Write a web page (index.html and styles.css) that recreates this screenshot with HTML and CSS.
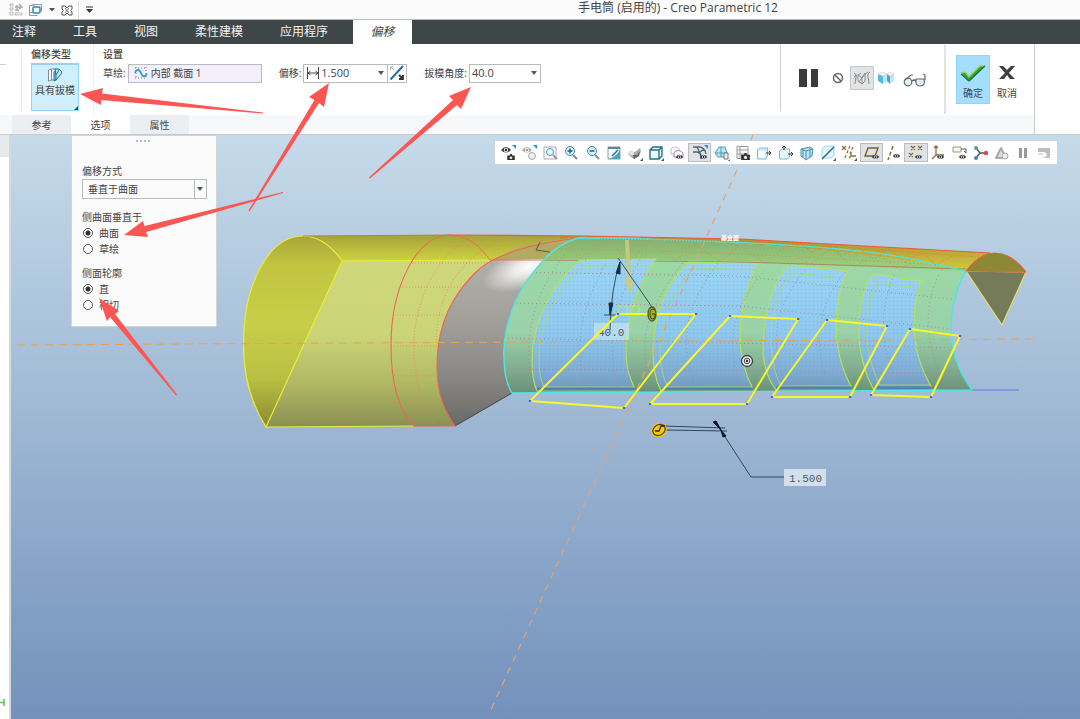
FILE: index.html
```html
<!DOCTYPE html>
<html lang="zh-CN">
<head>
<meta charset="utf-8">
<title>手电筒 (启用的) - Creo Parametric 12</title>
<link rel="stylesheet" href="styles.css">
</head>
<body>
<svg class="defs" width="0" height="0" aria-hidden="true">
  <defs>
    <symbol id="eye" viewBox="0 0 10 8"><path d="M0 4Q5-2 10 4Q5 9 0 4Z" fill="#3b3b3b"/><circle cx="5" cy="4" r="2.2" fill="#eee"/><circle cx="5" cy="4" r="1.2" fill="#222"/></symbol>
    <symbol id="cam" viewBox="0 0 10 8"><path d="M0 2h3l1-2h2l1 2h3v6H0Z" fill="#333"/><circle cx="5" cy="5" r="1.8" fill="#eee"/></symbol>
  </defs>
</svg>

<header class="titlebar">
  <div class="quick">
    <button class="plain" aria-label="重新生成"><svg width="20" height="16" viewBox="0 0 20 16"><path d="M7 2h3v2H7zM7 6h3v2H7zM7 10h3v3H7zM12 11h7v2h-7z" fill="none" stroke="#bbb"/><path d="M12 5h6M16 2l3 3-3 2M14 3v5M12 8h4" fill="none" stroke="#aaa" stroke-width="1.400"/></svg></button>
    <button class="plain" aria-label="窗口"><svg width="15" height="16" viewBox="0 0 15 16"><path d="M4.500 2.500h9v7M1.500 3.500h5M1.500 3.500v7h3M1.500 10v3.500h8" fill="none" stroke="#999"/><rect x="5" y="5" width="7" height="6" rx="1" fill="#eef8fc" stroke="#2789ae" stroke-width="1.500"/></svg></button>
    <button class="plain" aria-label="窗口列表"><svg width="8" height="16" viewBox="0 0 8 16"><path d="M1 6h6L4 9.500z" fill="#555"/></svg></button>
    <button class="plain" aria-label="关闭"><svg width="12" height="16" viewBox="0 0 12 16"><path d="M1 4h3l2 2 2-2h3v3L9.500 8.500 11 10v3H8l-2-2-2 2H1v-3l1.500-1.500L1 7z" fill="#fff" stroke="#555"/><path d="M4 6l4 5M8 6l-4 5" stroke="#777"/></svg></button>
    <button class="plain more" aria-label="自定义"><svg width="9" height="16" viewBox="0 0 9 16"><path d="M1 5h7" stroke="#333"/><path d="M1 7h7l-3.500 4z" fill="#333"/></svg></button>
  </div>
  <h1 class="title">手电筒 (启用的) - Creo Parametric 12</h1>
</header>

<nav class="menu">
  <button>注释</button><button>工具</button><button>视图</button><button>柔性建模</button><button>应用程序</button><button class="current">偏移</button>
</nav>

<section class="dashboard">
  <div class="dash-main">
    <div class="ribbon">
      <div class="cut-group"></div>
      <div class="group type-group">
        <h2>偏移类型</h2>
        <button class="type-button">
          <svg width="16" height="16" viewBox="0 0 16 16"><path d="M1.500 3l3-1v11l-3 1zM4.500 2h5v11h-5" fill="#f4fafd" stroke="#7d8a90"/><path d="M7 5l4-3v5l-2 6-2 1z" fill="#77c3dd" stroke="#237291"/><path d="M8 2h4l2.500 2.500v2L9 13V8z" fill="#b8e4f2" stroke="#237291"/><path d="M9 8l3-5" stroke="#237291"/></svg>
          <span>具有拔模</span>
        </button>
      </div>
      <div class="group settings">
        <h2>设置</h2>
        <div class="fields">
          <label for="sketch">草绘:</label>
          <div class="box sketch-box">
            <svg width="14" height="14" viewBox="0 0 14 14"><path d="M2 1v12M12 1v12M1 2h12M1 12h12" stroke="#777" stroke-dasharray="1 2"/><path d="M1 7C3 2 6 4 7 7s3 5 6 1" fill="none" stroke="#229fdb" stroke-width="1.800"/></svg>
            <input id="sketch" value="内部 截面 1">
          </div>
          <label for="offset">偏移:</label>
          <div class="box offset-box">
            <svg width="14" height="14" viewBox="0 0 14 14"><path d="M1.500 1v12M12.500 1v12M2 7h10M4.500 5L2 7l2.500 2M9.500 5L12 7 9.500 9" fill="none" stroke="#444"/></svg>
            <input id="offset" value="1.500">
            <button class="plain" aria-label="偏移值列表"><svg width="6" height="4" viewBox="0 0 6 4"><path d="M0 0h6L3 4z" fill="#555"/></svg></button>
          </div>
          <button class="flip" aria-label="反向"><svg width="16" height="16" viewBox="0 0 16 16"><path d="M1.500 14.500L14 1" stroke="#236f97" stroke-width="2"/><path d="M1.500 5V2h3M2 2l3 3" fill="none" stroke="#aaa"/><path d="M14 10v4h-4M10 10l4 4" fill="none" stroke="#333" stroke-width="1.800"/></svg></button>
          <label for="draft">拔模角度:</label>
          <div class="box draft-box">
            <input id="draft" value="40.0">
            <button class="plain" aria-label="角度列表"><svg width="6" height="4" viewBox="0 0 6 4"><path d="M0 0h6L3 4z" fill="#555"/></svg></button>
          </div>
        </div>
      </div>
      <div class="controls">
        <button class="plain" aria-label="暂停"><svg width="20" height="20" viewBox="0 0 20 20"><path d="M0 1h8v18H0zM12 1h7v18h-7z" fill="#3b3b3b"/></svg></button>
        <button class="plain ban" aria-label="无预览"><svg width="12" height="12" viewBox="0 0 12 12"><circle cx="6" cy="6" r="4.500" fill="none" stroke="#666" stroke-width="1.500"/><path d="M3 3l6 6" stroke="#666" stroke-width="1.500"/></svg></button>
        <button class="plain toggled" aria-label="分离预览"><svg width="18" height="16" viewBox="0 0 18 16"><path d="M1 3q3 1 2 5t-1 6M5 5l4 3v6l-4-3zM9 8l3-4v7l-3 3M5 5l3-2M17 2q-3 1-2 5t1 7M12 4l3-2M1 7l3-2M6 12l6-9" fill="#f3f3f3" fill-opacity=".6" stroke="#888"/></svg></button>
        <button class="plain" aria-label="连接预览"><svg width="18" height="14" viewBox="0 0 18 14"><path d="M1 3l5 2v8l-5-3z" fill="#51b9e8"/><path d="M6 5l4-2v7l-4 3zM13 5l4-2v7l-4 3z" fill="#bfe7f7"/><path d="M10 3l3 2v8l-3-3z" fill="#3ba8dc"/><path d="M1 3l4-2 5 2-4 2zM10 3l3-2 4 2-4 2z" fill="#f7fafb" stroke="#bbb" stroke-width=".5"/></svg></button>
        <button class="plain glasses" aria-label="检查几何"><svg width="24" height="14" viewBox="0 0 24 14"><circle cx="5" cy="9" r="3.800" fill="#e2eff5" stroke="#666" stroke-width="1.200"/><path d="M13 6h8q2 7-4 7-5 0-4-7Z" fill="#e2eff5" stroke="#666" stroke-width="1.200"/><path d="M9 8q2-2 4 0M2 7L8 2h2M22 7V2l-2-1" fill="none" stroke="#666" stroke-width="1.200"/></svg></button>
      </div>
      <div class="finish">
        <button class="ok"><svg width="26" height="20" viewBox="0 0 26 20"><path d="M1 11l4-2 4 5L20 3h5L10 18H8z" fill="#27a047"/><path d="M1 10l4-1 4 5L20 3h5" fill="none" stroke="#a5cf32" stroke-width="1.500"/><path d="M1 11l8 7L25 3" fill="none" stroke="#197348" stroke-width="1.200"/></svg><span>确定</span></button>
        <button><svg width="18" height="20" viewBox="0 0 18 20"><path d="M1 3h4l4 4 4-4h4l-6 7 6 6h-5l-3-4-3 4H1l6-6z" fill="#3f3f3f"/></svg><span>取消</span></button>
      </div>
    </div>
    <div class="tabs" role="tablist">
      <button role="tab">参考</button><button role="tab" class="selected" aria-selected="true">选项</button><button role="tab">属性</button>
    </div>
  </div>
</section>

<main class="workspace">
  <aside class="tree">
    <svg class="tree-mark" width="5" height="9" viewBox="0 0 5 9"><path d="M0 4.500h4M4 1v7" stroke="#55c94c" stroke-width="1.500"/></svg>
  </aside>
  <div class="viewport">
    <svg class="scene" viewBox="11 135 1069 584" preserveAspectRatio="xMinYMin meet">
      <defs>
        <linearGradient id="face" x1="0" y1="236" x2="0" y2="427" gradientUnits="userSpaceOnUse"><stop offset="0" stop-color="#a7a739"/><stop offset=".15" stop-color="#c1c440"/><stop offset=".45" stop-color="#c8ce49"/><stop offset=".75" stop-color="#b9bf43"/><stop offset="1" stop-color="#898b31"/></linearGradient>
        <linearGradient id="band" x1="0" y1="236" x2="0" y2="262" gradientUnits="userSpaceOnUse"><stop offset="0" stop-color="#a4a43a"/><stop offset=".5" stop-color="#bbbd3c"/><stop offset="1" stop-color="#cfd446"/></linearGradient>
        <linearGradient id="front" x1="0" y1="260" x2="0" y2="427" gradientUnits="userSpaceOnUse"><stop offset="0" stop-color="#ced77b"/><stop offset=".45" stop-color="#cbd477"/><stop offset=".75" stop-color="#afb763"/><stop offset="1" stop-color="#8a8f52"/></linearGradient>
        <linearGradient id="cone" x1="0" y1="245" x2="0" y2="427" gradientUnits="userSpaceOnUse"><stop offset="0" stop-color="#b5b4b0"/><stop offset=".4" stop-color="#a2a19c"/><stop offset=".7" stop-color="#8b8a86"/><stop offset="1" stop-color="#686866"/></linearGradient>
        <radialGradient id="shine" cx="0" cy="0" r="50" gradientUnits="userSpaceOnUse" gradientTransform="translate(530 266) rotate(-22) scale(1 .4)"><stop offset="0" stop-color="#fff"/><stop offset=".35" stop-color="#fff" stop-opacity=".75"/><stop offset="1" stop-color="#fff" stop-opacity="0"/></radialGradient>
        <linearGradient id="green" x1="0" y1="260" x2="0" y2="392" gradientUnits="userSpaceOnUse"><stop offset="0" stop-color="#9cd9a6"/><stop offset=".55" stop-color="#9ad1a9"/><stop offset=".8" stop-color="#83b192"/><stop offset="1" stop-color="#6a9179"/></linearGradient>
        <linearGradient id="greenTop" x1="0" y1="238" x2="0" y2="268" gradientUnits="userSpaceOnUse"><stop offset="0" stop-color="#84b06f"/><stop offset="1" stop-color="#9dd07b"/></linearGradient>
        <linearGradient id="blue" x1="0" y1="260" x2="0" y2="392" gradientUnits="userSpaceOnUse"><stop offset="0" stop-color="#9ad4f4"/><stop offset=".55" stop-color="#8fc8ef"/><stop offset=".85" stop-color="#7fadd4"/><stop offset="1" stop-color="#6f95b9"/></linearGradient>
        <linearGradient id="orange" x1="0" y1="240" x2="0" y2="270" gradientUnits="userSpaceOnUse"><stop offset="0" stop-color="#b19235"/><stop offset="1" stop-color="#d2ca40"/></linearGradient>
        <pattern id="dots" width="4" height="4" patternUnits="userSpaceOnUse"><rect width="1" height="1" x="1" y="1" fill="#5793d8" opacity=".35"/></pattern>
        <clipPath id="bodyClip"><path d="M585 237C555 240 536 268 524 285C505 318 503 345 504 358C504 375 507 385 512 393L972 390Q939 345 958 288Q961 279 966 271Q820 242 585 237Z"/></clipPath>
        <clipPath id="ringClip"><path d="M450 235C415 235 391 290 391 345C391 385 400 412 414 426H455C445 412 437 395 437 367C437 345 440 308 475 273Q500 247 585 237Z"/></clipPath>
      </defs>

      <path d="M303 236L450 235 585 236 740 239 990 253 966 271 490 260 342 261Q325 238 303 236Z" fill="url(#band)"/>
      <path d="M560 236L740 239 990 253 966 271Q820 246 560 240Z" fill="url(#orange)"/>
      <path d="M342 261L490 260H510L455 426 266 427Z" fill="url(#front)"/>
      <path d="M303 236C268 236 243.500 285 243.500 345C243.500 380 252 405 266 427L342 261C330 244 318 236 303 236Z" fill="url(#face)" stroke="#e9eb3c" stroke-width="1.200"/>
      <path d="M342 261L490 260M266 427L414 426" stroke="#eaec3a" stroke-width="1.200"/>
      <path d="M585 237C540 240 500 250 475 273C440 308 437 345 437 367C437 395 445 412 455 426L512 393L640 260V237Z" fill="url(#cone)"/>
      <path d="M585 237C540 240 500 250 475 273C440 308 437 345 437 367C437 395 445 412 455 426L512 393L640 260V237Z" fill="url(#shine)"/>
      <path d="M585 237C540 240 515 246 494 260L545 259L590 237Z" fill="#b3aa62"/>
      <path d="M455 426L512 393" stroke="#444"/>

      <g clip-path="url(#ringClip)" fill="none" stroke="#e9826b" stroke-dasharray="1 2" stroke-width=".8">
        <path d="M391 246H570M391 263H500M391 287H470M391 315H445M391 346H440M391 376H445M391 404H460"/>
        <path d="M475 236C435 252 414 305 414 345Q414 392 435 426M510 236C455 257 436 300 436 345"/>
        <path d="M450 236Q480 238 500 254M490 236Q510 240 530 246M520 236L560 246"/>
      </g>
      <g fill="none" stroke="#ef6553" stroke-width="1.100">
        <path d="M450 235C415 235 391 290 391 345C391 385 400 412 414 426H455C445 412 437 395 437 367C437 345 440 308 475 273Q500 247 585 237"/>
        <path d="M450 235C468 236 480 246 490 260H545" stroke-width=".9"/>
        <path d="M303 236L450 235" stroke="#9c8b35" stroke-width=".9"/>
      </g>

      <path d="M585 237C555 240 536 268 524 285C505 318 503 345 504 358C504 375 507 385 512 393L972 390Q939 345 958 288Q961 279 966 271Q820 242 585 237Z" fill="url(#green)"/>
      <path d="M585 237C565 239 553 248 543 259L740 261 966 271Q820 242 585 237Z" fill="url(#greenTop)"/>
      <path d="M543 260L740 262 966 269" fill="none" stroke="#ab7d5b" stroke-width=".9"/>

      <g stroke="#b4e25a" stroke-width="1.200" fill="url(#blue)">
        <path d="M580 260C545 290 532 330 532 360C532 375 534 385 537 391L636 391C628 375 626 365 626 350C626 320 637 285 656 259Z"/>
        <path d="M689 262C662 285 653 325 653 353Q653 375 661 391H754Q740 365 740 337Q741 295 758 264Z"/>
        <path d="M788 265C769 285 763 325 763 353Q765 376 776 390H853Q836 360 836 325Q836 295 848 271Z"/>
        <path d="M872 274C861 290 858 320 859 340Q863 372 874 390H933Q914 358 914 325Q914 300 921 281Z"/>
      </g>
      <g fill="url(#dots)">
        <path d="M580 260C545 290 532 330 532 360Q532 380 537 391H636Q625 365 626 350C626 320 637 285 656 259Z"/>
        <path d="M689 262C662 285 653 325 653 353Q653 375 661 391H754Q740 365 740 337Q741 295 758 264Z"/>
        <path d="M788 265C769 285 763 325 763 353Q765 376 776 390H853Q836 360 836 325Q836 295 848 271Z"/>
        <path d="M872 274C861 290 858 320 859 340Q863 372 874 390H933Q914 358 914 325Q914 300 921 281Z"/>
      </g>
      <g fill="none" stroke="#a9d970" stroke-width=".9">
        <path d="M578 260L582 266H650M582 266C552 295 539 330 539 358Q539 378 544 387H634"/>
        <path d="M689 262L694 268 754 270M694 268C669 292 660 325 660 353Q661 375 668 387H752"/>
        <path d="M788 265L791 273 845 278M791 273C775 292 771 320 771 345Q773 372 781 386H851"/>
        <path d="M872 274L877 283 919 288M877 283C867 300 866 320 867 340Q871 370 880 385H931"/>
      </g>
      <path d="M537 389H636M661 389H754M776 388H853M874 388H933" stroke="#4a76a8" stroke-width="3" opacity=".7"/>

      <g clip-path="url(#bodyClip)" fill="none" stroke="#b08287" stroke-width=".8" stroke-dasharray="1 3">
        <path d="M500 272L740 276 960 300M500 303L740 306 960 330M500 338L960 348M500 369L960 373"/>
        <path d="M565 255C535 290 528 330 529 355Q530 380 537 393M605 265Q580 310 580 345T587 393M640 260Q610 310 612 350T622 393M685 260Q645 310 645 345T655 393M720 260Q682 310 687 350T700 393M765 270Q730 310 733 350T748 393M805 270Q772 310 777 350T795 393M845 272Q815 310 820 350T840 393M894 275Q878 315 886 350T905 393M938 275Q922 315 932 350T950 393"/>
        <path stroke="#cf8069" d="M550 249Q700 250 940 265M560 240l25 20 20-20 25 20 20-18 25 19 20-17 25 18 20-17 25 18 20-16 25 18 20-16 25 18 20-14 25 17 20-12 25 14"/>
      </g>
      <path d="M580 238Q680 239 770 244T907 258L966 271" fill="none" stroke="#58dfd1" stroke-width="1.400"/>
      <path d="M585 237C555 240 536 268 524 285C505 318 503 345 504 358C504 375 507 385 512 393L972 390Q939 345 958 288Q961 279 966 271" fill="none" stroke="#4fe5e5" stroke-width="1.400"/>
      <path d="M450 235L585 236 740 239 990 253" fill="none" stroke="#ef5a3b" stroke-width="1.200"/>
      <path d="M600 239L760 242 980 257M800 243l12 9 15-7 15 11 16-9 15 12 17-10 15 13 17-10 14 13 18-10" fill="none" stroke="#d66d38" stroke-width=".8" stroke-dasharray="1 2"/>
      <path d="M966 271L1026 272 1002 325Z" fill="#757b58" stroke="#dddf76" stroke-width="1.200"/>
      <path d="M966 271C978 256 987 253 995 253C1008 253 1018 262 1026 272Z" fill="#8b8935" stroke="#e55e3c" stroke-width="1.200"/>
      <path d="M972 390H1019" stroke="#7890df" stroke-width="1.300"/>
      <path d="M540 242l-4 8 14 2" stroke="#5e5743" fill="none"/>

      <path d="M17 345L1037 339" stroke="#eea24c" stroke-dasharray="8 6" stroke-width="1"/>
      <path d="M753 135L607 455 489 714" fill="none" stroke="#e9a16f" stroke-dasharray="7 6" stroke-width="1.200"/>

      <path d="M625 240h4l2 40h3l-3 15-7-15h3z" fill="#c9ca80" opacity=".9"/>
      <path d="M618 306h9v8h-9zM630 306h9v8h-9z" fill="none" stroke="#b5e575"/>
      <rect x="594" y="323" width="35" height="17" fill="#c8e4f0" opacity=".7"/>
      <text x="598" y="336" class="dim-text">40.0</text>
      <path d="M610 330Q611 288 620 262M604 315H616M618 258L652 307" fill="none" stroke="#35505f"/>
      <path d="M609 303h4l-3 12zM616 273l4-11v12z" fill="#123045" stroke="#123045"/>

      <g fill="none" stroke="#f8f727" stroke-width="2" stroke-linejoin="round">
        <path d="M618 314H696L624 408 530 401Z"/><path d="M730 316L798 319 747 404H650Z"/><path d="M827 320L887 326 850 397H772Z"/><path d="M910 329L960 336 931 397 871 395Z"/>
      </g>
      <path d="M618 314h.1M696 314h.1M624 408h.1M530 401h.1M730 316h.1M798 319h.1M747 404h.1M650 404h.1M827 320h.1M887 326h.1M850 397h.1M772 397h.1M910 329h.1M960 336h.1M931 397h.1M871 395h.1" stroke="#3f68e8" stroke-width="2.200" stroke-linecap="square"/>
      <ellipse cx="652" cy="314" rx="4" ry="7" fill="#a5ad27" stroke="#555c1b" stroke-width="1.300"/><path d="M655 310q-5-3-5 4t5 4v-4h-3" fill="none" stroke="#45490f"/>
      <circle cx="747" cy="361" r="5.500" fill="#eee" stroke="#3b4245" stroke-width="1.300"/><circle cx="747" cy="361" r="2.800" fill="none" stroke="#444"/><circle cx="747" cy="361" r="1.200" fill="#333"/>
      <text x="721" y="240" class="csys-text">基金面</text>

      <path d="M664 426L725 428M664 430L727 431M716 423L751 477H784" fill="none" stroke="#35435d"/>
      <path d="M713 422l3-1 5 9zM721 430l5 6-3 1z" fill="#0a1033" stroke="#0a1033"/>
      <ellipse cx="659" cy="430" rx="8" ry="7" transform="rotate(-30 659 430)" fill="#f5c916"/><ellipse cx="659" cy="430" rx="6.500" ry="5.200" transform="rotate(-30 659 430)" fill="none" stroke="#574508" stroke-width="1.300"/><path d="M655 431h4l2-5h4" fill="none" stroke="#32290b" stroke-width="1.300"/>
      <rect x="784" y="469" width="42" height="17" fill="#d3dfeb"/>
      <text x="789" y="482" class="dim-text">1.500</text>
    </svg>

    <div class="toolbar" role="toolbar">
      <button aria-label="显示"><svg viewBox="0 0 16 16"><use href="#eye" x="0" y="1" width="12" height="8"/><use href="#cam" x="7" y="9" width="8" height="6"/><path d="M12 0h4v4z" fill="#1b91ed"/></svg></button>
      <button aria-label="隐藏"><svg viewBox="0 0 16 16"><g opacity=".45"><use href="#eye" x="0" y="1" width="12" height="8"/></g><circle cx="11" cy="11" r="3.500" fill="#eee" stroke="#aaa"/><path d="M12 0h4v4z" fill="#1b91ed"/></svg></button>
      <button aria-label="重新调整"><svg viewBox="0 0 16 16"><path d="M2 2h12v12H2z" fill="#fafafa" stroke="#aaa"/><circle cx="8" cy="7" r="3.500" fill="#e2f5fd" stroke="#4f9cbd"/><path d="M11 10l4 4" stroke="#999" stroke-width="2"/></svg></button>
      <button aria-label="放大"><svg viewBox="0 0 16 16"><circle cx="7" cy="6" r="4.500" fill="#def3fb" stroke="#378bad"/><path d="M4.500 6h5M7 3.500v5" stroke="#176083" stroke-width="1.500"/><path d="M10 10l4 4" stroke="#888" stroke-width="2"/></svg></button>
      <button aria-label="缩小"><svg viewBox="0 0 16 16"><circle cx="7" cy="6" r="4.500" fill="#def3fb" stroke="#378bad"/><path d="M4.500 6h5" stroke="#176083" stroke-width="1.500"/><path d="M10 10l4 4" stroke="#888" stroke-width="2"/></svg></button>
      <button aria-label="重画"><svg viewBox="0 0 16 16"><path d="M2 2h12v12H2z" fill="#f1fafd" stroke="#999"/><path d="M2 14Q9 13 14 5v9z" fill="#4fa1bd"/><path d="M2 3h12M6 11l6-6" stroke="#28738c" stroke-width="1.500"/></svg></button>
      <button aria-label="渲染"><svg viewBox="0 0 16 16"><path d="M1 9l2-3 5 1 5-4 1 3-2 5-5 3-3-2z" fill="#aaa"/><path d="M6 10l4 0 3-4-1 5-5 3z" fill="#666"/><circle cx="4.500" cy="8" r="2.500" fill="#e2e2e2"/><path d="M16 13v3h-3z" fill="#555"/></svg></button>
      <button aria-label="显示样式"><svg viewBox="0 0 16 16"><path d="M2 5l3-3h9v9l-3 3H2zM2 5h9v9M11 5l3-3" fill="#eef9fd" stroke="#24718e" stroke-width="1.400"/><path d="M16 13v3h-3z" fill="#555"/></svg></button>
      <button aria-label="图层"><svg viewBox="0 0 16 16"><path d="M2 9V4q4-4 8 0v5z" fill="#fff" stroke="#bbb"/><path d="M5 12V8q4-5 9 0v4z" fill="#fff" stroke="#9a76b5"/><use href="#eye" x="6" y="9" width="9" height="6"/></svg></button>
      <button class="on" aria-label="样式显示"><svg viewBox="0 0 16 16"><path d="M1 2h7q5 1 6 7M1 7h4q4 0 4 7M5 2l4 8M12 4L7 8" fill="none" stroke="#4c6673" stroke-width="1.300"/><use href="#eye" x="7" y="9" width="9" height="6"/><path d="M12 0h4v4z" fill="#1b91ed"/></svg></button>
      <button aria-label="截面"><svg viewBox="0 0 16 16"><path d="M1 8l4-6h6l2 6v4H4z" fill="#b9e5f4" stroke="#519ab7"/><path d="M1 8h12M7 2v10" stroke="#519ab7"/><path d="M10 8h4v6h-4z" fill="#eee" stroke="#777"/><path d="M16 14v2h-2z" fill="#555"/></svg></button>
      <button aria-label="视图管理器"><svg viewBox="0 0 16 16"><path d="M2 1.500h11v12H2zM2 5h11M2 9h11M5 2v11" fill="#fafafa" stroke="#999"/><use href="#cam" x="6" y="8" width="9" height="7"/></svg></button>
      <button aria-label="平移"><svg viewBox="0 0 16 16"><path d="M1.500 5l2-2h8v8l-2 3h-8z" fill="#cdeefa" stroke="#6fc0df"/><path d="M2.500 6h6v7h-6z" fill="#fff"/><path d="M10 8h5M13 6l2 2-2 2" fill="none" stroke="#333"/></svg></button>
      <button aria-label="移动"><svg viewBox="0 0 16 16"><path d="M1.500 6l2-2h8v8l-2 2h-8z" fill="#e6f7fc" stroke="#6bbddb"/><path d="M6 5V1M4 3l2-2 2 2M10 9h5M13 7l2 2-2 2" fill="none" stroke="#333"/></svg></button>
      <button aria-label="透视"><svg viewBox="0 0 16 16"><path d="M2 4l9-2 3 2-1 7-6 4-5-4zM2 4l5 2v8M7 6l7-2M4 5v7M11 3v9" fill="#bce3f1" stroke="#4d94b1"/></svg></button>
      <button aria-label="剖面"><svg viewBox="0 0 16 16"><path d="M2 4l3-3h9v9l-3 3H2z" fill="#e0f4fb" stroke="#a2d5e8"/><path d="M2 14L14 2" stroke="#286b83" stroke-width="1.500"/><path d="M16 13v3h-3z" fill="#555"/></svg></button>
      <button aria-label="基准显示"><svg viewBox="0 0 16 16"><path d="M1 1l4 4M5 1L1 5" stroke="#8c7139" stroke-width="1.300"/><path d="M9 1L3 15M12 2L9 9" stroke="#8c7139" stroke-width="1.300" stroke-dasharray="3 2"/><path d="M10 7v4l-2 2M10 11h5" fill="none" stroke="#8c7139" stroke-width="1.300"/><path d="M16 13v3h-3z" fill="#555"/></svg></button>
      <button class="on" aria-label="平面显示"><svg viewBox="0 0 16 16"><path d="M4 3h10l-3 8H1z" fill="none" stroke="#7b602c" stroke-width="1.400"/><use href="#eye" x="7" y="9" width="9" height="6"/></svg></button>
      <button aria-label="轴显示"><svg viewBox="0 0 16 16"><path d="M7 1L2 15" stroke="#896d37" stroke-width="1.500" stroke-dasharray="4 2"/><use href="#eye" x="6" y="8" width="9" height="6"/></svg></button>
      <button class="on" aria-label="点显示"><svg viewBox="0 0 16 16"><path d="M3 1l4 4M7 1L3 5M10 1l4 4M14 1l-4 4M1 8l4 4M5 8l-4 4" stroke="#896d37" stroke-width="1.300"/><use href="#eye" x="6" y="9" width="9" height="6"/></svg></button>
      <button aria-label="坐标系显示"><svg viewBox="0 0 16 16"><path d="M6 1v9l-4 4M6 10h8M4 3l2-2 2 2" fill="none" stroke="#896d37" stroke-width="1.300"/><use href="#eye" x="6" y="9" width="9" height="6"/></svg></button>
      <button aria-label="注释显示"><svg viewBox="0 0 16 16"><path d="M1 2h8v5H1z" fill="#fbf6d8" stroke="#999"/><path d="M9 4h5v4M12 6l2 2" fill="none" stroke="#555"/><use href="#eye" x="6" y="9" width="9" height="6"/></svg></button>
      <button aria-label="旋转中心"><svg viewBox="0 0 16 16"><path d="M3 3l4 5-4 5M7 8h6" fill="none" stroke="#555" stroke-width="1.500"/><circle cx="3" cy="3" r="2" fill="#51a57b"/><circle cx="3" cy="13" r="2" fill="#4788ae"/><circle cx="13" cy="8" r="2.200" fill="#d34e4b"/></svg></button>
      <button aria-label="警告"><svg viewBox="0 0 16 16"><path d="M7 3l5 10H2z" fill="#ddd" stroke="#aaa" stroke-width="2" stroke-linejoin="round"/><circle cx="11" cy="11" r="3" fill="#eee" stroke="#aaa"/></svg></button>
      <button aria-label="暂停"><svg viewBox="0 0 16 16"><path d="M4 3h3v10H4zM9 3h3v10H9z" fill="#999"/></svg></button>
      <button aria-label="停止"><svg viewBox="0 0 16 16"><path d="M2 3h12v10H6q5-1 5-3T8 7H2z" fill="#bdbdbd"/><path d="M2 8h5v2H2z" fill="#ddd"/></svg></button>
    </div>

    <form class="options">
      <div class="grip"></div>
      <label class="caption" for="mode">偏移方式</label>
      <div class="select-wrap">
        <select id="mode"><option>垂直于曲面</option></select>
        <svg width="6" height="4" viewBox="0 0 6 4"><path d="M0 0h6L3 4z" fill="#555"/></svg>
      </div>
      <fieldset>
        <legend>侧曲面垂直于</legend>
        <label><input type="radio" name="normal" checked>曲面</label>
        <label><input type="radio" name="normal">草绘</label>
      </fieldset>
      <fieldset>
        <legend>侧面轮廓</legend>
        <label><input type="radio" name="profile" checked>直</label>
        <label><input type="radio" name="profile">相切</label>
      </fieldset>
    </form>
  </div>
</main>

<svg class="arrows" viewBox="0 0 1080 719" preserveAspectRatio="xMinYMin meet" aria-hidden="true">
  <g fill="#fd5552">
    <path d="M80 94L103 88 102 93.500 263 112.500 263 113.500 101 100 101 105Z"/>
    <path d="M329 83L309 97 314.500 100 248.500 210.500 249.500 211.500 319 103 324 107Z"/>
    <path d="M471 87L449 96 453 100 369 177.500 370 178.500 457 105 461 109Z"/>
    <path d="M124 235L143 221 144.500 226 283 192 283 193 146 232 148 237Z"/>
    <path d="M99 298L119 311 115 314 177 394.500 176 395.500 110 317 107 321Z"/>
  </g>
</svg>
</body>
</html>
```

FILE: styles.css
```css
* { box-sizing: border-box; }
body {
  margin: 0;
  min-height: 100vh;
  display: flex;
  flex-direction: column;
  position: relative;
  overflow-x: hidden;
  background: #fff;
  color: #444;
  font: 10px/16px "Open Sans", "Noto Sans CJK SC", sans-serif;
}
button, input, select { font: inherit; color: inherit; }
button { border: 0; padding: 0; background: none; }
svg { display: block; }
.defs { position: absolute; }
.plain { display: flex; align-items: center; justify-content: center; }

.titlebar {
  display: grid;
  grid-template-columns: 276px 1fr;
  height: 20px;
  background: #fbfbfb;
  border-bottom: 1px solid #b5baba;
}
.quick { display: flex; align-items: center; gap: 5px; padding-left: 3px; }
.quick .more { border-left: 1px solid #ddd; padding-left: 6px; height: 18px; }
.title { margin: 0; font-size: 12px; font-weight: 400; line-height: 16px; text-align: center; }

.menu { display: flex; height: 24px; padding-left: 12px; gap: 37px; background: #3e4647; font-size: 12px; }
.menu button { color: #f2f2f2; line-height: 24px; }
.menu .current { background: #fff; color: #444; font-style: italic; width: 59px; margin-left: -12px; }

.dashboard { display: flex; padding-right: 45px; border-bottom: 1px solid #c3cdd0; }
.dash-main { flex: 1; border-right: 1px solid #c8cccd; }
.ribbon { display: flex; height: 71px; }
.cut-group { width: 22px; border-right: 1px solid #e6e6e6; margin: 5px 0 4px; }
.cut-group::before { content: ""; display: block; width: 6px; height: 1px; margin-top: 15px; background: #ccc; }
.group { padding-top: 2px; }
.group h2 { margin: 0; font-size: 10px; line-height: 16px; font-weight: 500; }
.type-group { width: 71px; padding-left: 9px; }
.type-button {
  position: relative;
  display: flex;
  flex-direction: column;
  align-items: center;
  width: 48px;
  height: 48px;
  margin-top: 1px;
  padding-top: 2px;
  background: #cfefff;
  border: 1px solid #8fd5f8;
  border-top-width: 2px;
}
.type-button::after {
  content: "";
  position: absolute;
  right: 0;
  bottom: 0;
  border: 2px solid;
  border-color: transparent #444 #444 transparent;
}
.type-button span { line-height: 14px; }
.settings { padding-left: 9px; border-left: 1px solid #eee; }
.fields { display: flex; align-items: center; margin-top: 1px; height: 20px; }
.fields label { margin-right: 2px; white-space: nowrap; }
.box { display: flex; align-items: center; height: 19px; border: 1px solid #b9bcbd; background: #fff; padding: 0 3px 0 2px; }
.box input { flex: 1; min-width: 0; border: 0; padding: 0; background: transparent; outline: 0; font-size: 11px; }
.sketch-box { width: 134px; margin-right: 17px; padding-left: 5px; gap: 3px; background: #f3effd; }
.sketch-box input { font-size: 10px; }
.offset-box { width: 85px; gap: 1px; }
.flip { width: 19px; height: 19px; padding-left: 1px; border: 1px solid #b9bcbd; border-left: 0; margin-right: 17px; }
.draft-box { width: 72px; }
.controls { display: flex; align-items: center; margin: 1px 0 4px auto; width: 164px; padding-left: 18px; border-left: 1px solid #cdd0d1; }
.ban { margin: 0 6px 0 13px; }
.toggled { width: 24px; height: 24px; background: #e1e3e5; border: 1px solid #c5c7c9; margin-right: 3px; }
.glasses { margin: 3px 0 0 8px; }
.finish { display: flex; width: 90px; padding: 10px 0 0 10px; margin: 1px 0; border-left: 2px solid #e1e3e4; }
.finish button { display: flex; flex-direction: column; align-items: center; width: 34px; height: 49px; padding-top: 8px; gap: 2px; }
.finish .ok { background: #a3deff; border: 1px solid #8fd5f8; padding-top: 7px; }

.tabs { display: flex; height: 19px; padding-left: 12px; background: #f6f8fa; }
.tabs button { width: 59px; background: #eceff1; line-height: 20px; }
.tabs .selected { background: #fff; }

.workspace { flex: 1; display: flex; }
.tree { display: flex; align-items: flex-end; width: 11px; padding-bottom: 12px; border-right: 2px solid #d3dadd; background: linear-gradient(#e5ebeb 22px, #fff 22px); }
.viewport { flex: 1; position: relative; background: linear-gradient(#c5dbea, #a1bad5 45%, #86a3c7 76%, #7391bb); }
.scene { width: 100%; height: auto; }
.dim-text { font: 11px "Liberation Mono", monospace; fill: #4e5a66; }
.csys-text { font: 6px "Noto Sans CJK SC", sans-serif; font-weight: 700; fill: #fff; }

.toolbar { position: absolute; top: 5px; left: 483px; right: 22px; display: flex; height: 25px; padding: 2px; background: #fff; border: 1px solid #cfd6da; }
.toolbar button { flex: 1; display: flex; align-items: center; justify-content: center; }
.toolbar svg { width: 16px; height: 16px; }
.toolbar .on { background: #dfe3e6; border: 1px solid #b8bdc1; }

.options { position: absolute; top: 0; left: 60px; width: 146px; padding: 4px 10px 13px; background: #fbfbfb; border: 1px solid #d0d6d8; }
.grip { width: 16px; height: 2px; margin: 0 auto 21px; background: repeating-linear-gradient(90deg, #bbb 0 2px, transparent 2px 4px); }
.caption { display: block; line-height: 16px; }
.select-wrap { position: relative; margin-bottom: 10px; }
.select-wrap select { appearance: none; display: block; width: 125px; height: 20px; border: 1px solid #b9bcbd; border-radius: 0; padding: 0 5px; background: linear-gradient(90deg, transparent 111px, #b9bcbd 111px 112px, transparent 112px); }
.select-wrap svg { position: absolute; right: 3px; top: 8px; pointer-events: none; }
.options fieldset { margin: 0 0 8px; padding: 0; border: 0; }
.options legend { padding: 0; line-height: 16px; }
.options fieldset:last-child { margin: 0; }
.options fieldset label { display: flex; align-items: center; gap: 6px; height: 16px; }
.options input { appearance: none; width: 10px; height: 10px; margin: 0 0 0 1px; border: 1px solid #555; border-radius: 50%; background: #fff; }
.options input:checked { background: radial-gradient(#333 0 2px, #fff 3px); }

.arrows { position: absolute; top: 0; left: 0; width: 100%; pointer-events: none; }
```
